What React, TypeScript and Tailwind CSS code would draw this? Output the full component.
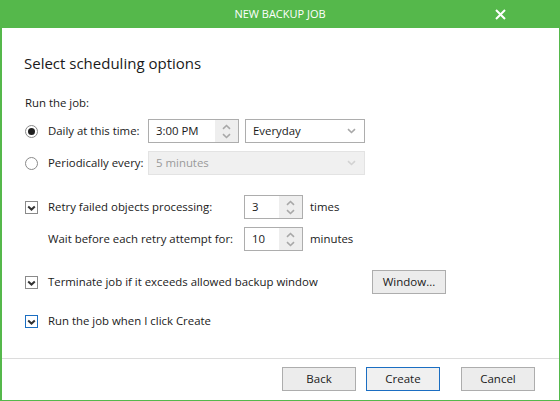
import React from "react"

const font = { fontFamily: '"Segoe UI", "Open Sans", "Noto Sans", sans-serif' }

function ChevronDown({ className = "" }: { className?: string }) {
  return (
    <svg width="9" height="6" viewBox="0 0 9 6" className={className}>
      <path d="M1 1.2 L4.5 4.5 L8 1.2" fill="none" stroke="currentColor" strokeWidth="1.6" />
    </svg>
  )
}

function ChevronUp({ className = "" }: { className?: string }) {
  return (
    <svg width="9" height="6" viewBox="0 0 9 6" className={className}>
      <path d="M1 4.8 L4.5 1.5 L8 4.8" fill="none" stroke="currentColor" strokeWidth="1.6" />
    </svg>
  )
}

function Radio({ checked }: { checked?: boolean }) {
  return (
    <span className="flex h-[13px] w-[13px] items-center justify-center rounded-full border border-[#8a8a8a] bg-white">
      {checked && <span className="h-[7px] w-[7px] rounded-full bg-[#1f1f1f]" />}
    </span>
  )
}

function Checkbox({ focused }: { focused?: boolean }) {
  return (
    <span
      className={`flex h-[13px] w-[13px] items-center justify-center border bg-white ${
        focused ? "border-[#1b6ec2]" : "border-[#8a8a8a]"
      }`}
    >
      <svg width="9" height="7" viewBox="0 0 9 7">
        <path d="M1.2 2.6 L4.5 5.6 L7.8 2.6" fill="none" stroke="#333" strokeWidth="2" />
      </svg>
    </span>
  )
}

function SpinBox({ value, width }: { value: string; width: string }) {
  return (
    <div className={`flex h-6 shrink-0 ${width} border border-[#adadad] bg-white`}>
      <span className="flex flex-1 items-center pl-[7px] text-[#1a1a1a]">{value}</span>
      <div className="flex w-[23px] flex-col items-center justify-center gap-[3px] bg-[#eeeeee] text-[#a8a8a8]">
        <ChevronUp />
        <ChevronDown />
      </div>
    </div>
  )
}

function Button({ label, primary, className = "" }: { label: string; primary?: boolean; className?: string }) {
  return (
    <button
      className={`flex h-6 w-[74px] shrink-0 items-center justify-center border text-[11.5px] text-[#1a1a1a] ${
        primary ? "border-[#1b6ec2] bg-[#f0f0f0]" : "border-[#adadad] bg-[#ececec]"
      } ${className}`}
    >
      {label}
    </button>
  )
}

export default function App() {
  return (
    <div className="flex h-[401px] w-[560px] flex-col bg-white" style={font}>
      <div className="relative flex h-[28px] items-center justify-center bg-[#55b84b] text-[11px] text-white">
        NEW BACKUP JOB
        <svg width="11" height="11" viewBox="0 0 11 11" className="absolute right-[54px] top-[9px]">
          <path d="M1 1 L10 10 M10 1 L1 10" stroke="white" strokeWidth="2" />
        </svg>
      </div>
      <div className="flex flex-1 flex-col border-b border-l-2 border-r border-[#55b84b]">
        <div className="flex flex-1 flex-col whitespace-nowrap pl-[22px] text-[11.4px] text-[#1a1a1a]">
          <h1 className="mt-[25px] h-5 text-[15px] leading-5 text-[#1a1a1a]">Select scheduling options</h1>

          <div className="mt-[22px] h-4 pl-px leading-4">Run the job:</div>

          <div className="mt-2 flex h-6 items-center">
            <span className="pl-px">
              <Radio checked />
            </span>
            <span className="ml-[10px] w-[100px] shrink-0">Daily at this time:</span>
            <SpinBox value="3:00 PM" width="w-[91px]" />
            <div className="ml-[6px] flex h-6 w-[120px] items-center justify-between border border-[#adadad] bg-white pl-[7px] pr-[8px]">
              <span>Everyday</span>
              <ChevronDown className="text-[#a8a8a8]" />
            </div>
          </div>

          <div className="mt-2 flex h-6 items-center">
            <span className="pl-px">
              <Radio />
            </span>
            <span className="ml-[10px] w-[100px] shrink-0">Periodically every:</span>
            <div className="flex h-6 w-[217px] items-center justify-between border border-[#e3e3e3] bg-[#f0f0f0] pl-[7px] pr-[8px] text-[#9a9a9a]">
              <span>5 minutes</span>
              <ChevronDown className="text-[#d2d2d2]" />
            </div>
          </div>

          <div className="mt-5 flex h-6 items-center">
            <span className="pl-px">
              <Checkbox />
            </span>
            <span className="ml-[10px] w-[196px] shrink-0">Retry failed objects processing:</span>
            <SpinBox value="3" width="w-[59px]" />
            <span className="ml-[7px]">times</span>
          </div>

          <div className="mt-2 flex h-6 items-center">
            <span className="ml-[24px] w-[196px] shrink-0">Wait before each retry attempt for:</span>
            <SpinBox value="10" width="w-[59px]" />
            <span className="ml-[7px]">minutes</span>
          </div>

          <div className="mt-[19px] flex h-6 items-center">
            <span className="pl-px">
              <Checkbox />
            </span>
            <span className="ml-[10px] w-[324px] shrink-0">Terminate job if it exceeds allowed backup window</span>
            <Button label="Window..." />
          </div>

          <div className="mt-[15px] flex h-6 items-center">
            <span className="pl-px">
              <Checkbox focused />
            </span>
            <span className="ml-[10px]">Run the job when I click Create</span>
          </div>
        </div>

        <div className="flex h-[42px] justify-end border-t border-[#dcdcdc] pr-6 pt-2">
          <Button label="Back" />
          <Button label="Create" primary className="ml-[10px]" />
          <Button label="Cancel" className="ml-[21px]" />
        </div>
      </div>
    </div>
  )
}
